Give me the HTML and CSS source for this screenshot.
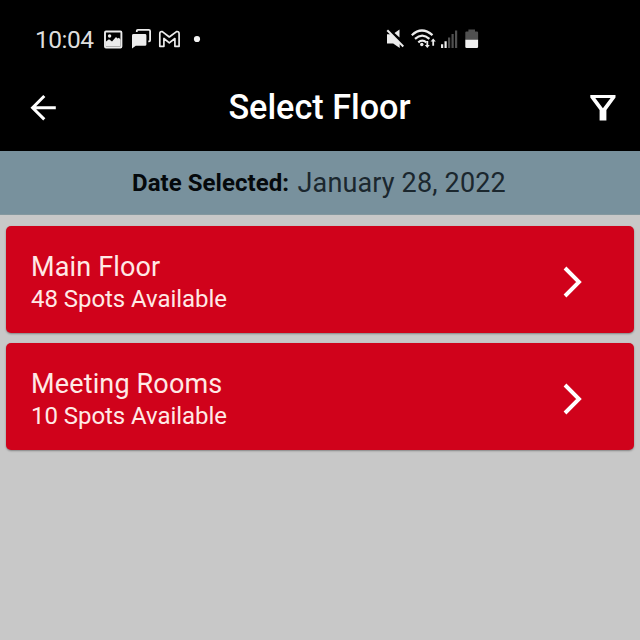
FILE: index.html
```html
<!DOCTYPE html>
<html lang="en">
<head>
<meta charset="utf-8">
<title>Select Floor</title>
<link rel="stylesheet" href="styles.css">
</head>
<body>
<header class="top">
  <div class="status">
    <div class="status-left">
      <span class="clock">10:04</span>
      <svg class="ic-notify" width="104" height="24" viewBox="100 27 104 24">
        <rect x="105" y="31.500" width="16.400" height="16" rx="1" fill="none" stroke="#ececec" stroke-width="1.900"/>
        <circle cx="109.600" cy="36" r="1.700" fill="#ececec"/>
        <path d="M106 46.500v-5l3-2.200 3 2.200 4-4.500 1.500 1.500 1.500-.8 1.500 2v6.800z" fill="#ececec"/>
        <path d="M133.600 34h11.400q1.400 0 1.400 1.400v9q0 1.400-1.400 1.400h-9.200l-3.800 2.700V35.400q0-1.400 1.600-1.400z" fill="#ececec"/>
        <path d="M136.800 32v-1.200q0-1 1-1h11q1.300 0 1.300 1.300v9.200q0 1-1 1h-.8" fill="none" stroke="#ececec" stroke-width="1.800"/>
        <path d="M159.800 46.300V33.800q0-2.600 2.500-2.200l7 5.400 7.200-5.400q2.600-.4 2.600 2.200v12.500h-4.200v-7.800l-5.600 4.300-5.400-4.300v7.800z" fill="none" stroke="#ececec" stroke-width="1.700" stroke-linejoin="round"/>
        <circle cx="197" cy="39" r="3.100" fill="#f4f4f4"/>
      </svg>
    </div>
    <svg class="ic-system" width="96" height="24" viewBox="385 27 96 24">
      <path d="M387 34.300h4.700l8 8v5.700l-6.500-4.600H387zM394.500 33l5-3.600v8z" fill="#ececec"/>
      <path d="M387.300 30.300l16 16.200" stroke="#ececec" stroke-width="2"/>
      <g fill="none" stroke="#ececec" stroke-width="2.200">
        <path d="M411.800 35.200q10-9.400 20.700 0"/>
        <path d="M415 38.900q7.200-6.400 14.400 0"/>
        <path d="M418.300 42.300q4-3.500 8 0"/>
      </g>
      <circle cx="421.800" cy="44.500" r="1.700" fill="#ececec"/>
      <path d="M426.400 41h1.800v4h1.600l-2.500 3-2.500-3h1.600zM432.300 45.800h1.800v-4.200h1.700l-2.600-3.200-2.600 3.200h1.700z" fill="#ececec"/>
      <path d="M441 44.300h2.200v3.700H441zM444.500 41.300h2.200V48h-2.200z" fill="#ececec"/>
      <path d="M448 37.500h2.200V48H448zM451.500 34h2.200v14h-2.200zM455 30.500h2.200V48H455z" fill="#505050"/>
      <path d="M465.300 40v-7.500q0-1.100 1.100-1.100h2v-2h6.600v2h2q1.100 0 1.100 1.100V40z" fill="#505050"/>
      <path d="M465.300 39.800h12.800v7q0 1.200-1.200 1.200h-10.400q-1.200 0-1.200-1.200z" fill="#f0f0f0"/>
    </svg>
  </div>
  <div class="appbar">
    <svg width="28" height="28" viewBox="29 94 28 28" fill="none" stroke="#fff" stroke-width="3">
      <path d="M55.800 107.700H33M44.300 96L32.600 107.700l11.700 11.700"/>
    </svg>
    <h1 class="title">Select Floor</h1>
    <svg width="28" height="28" viewBox="589 94 28 28">
      <path fill="#fff" fill-rule="evenodd" d="M590.300 95h25.200v2.500l-9.100 12.500v10.600h-6.800V110l-9.300-12.500zM595.300 97.900l7.600 10.300 7.700-10.300z"/>
    </svg>
  </div>
</header>
<div class="date"><b class="date-label">Date Selected:</b><span class="date-value">January 28, 2022</span></div>
<main class="floors">
  <section class="card">
    <div>
      <div class="name">Main Floor</div>
      <div class="spots">48 Spots Available</div>
    </div>
    <svg width="22" height="34" viewBox="0 0 22 34" fill="none" stroke="#fff" stroke-width="3.900"><path d="M3 3l14 14-14 14"/></svg>
  </section>
  <section class="card card-rooms">
    <div>
      <div class="name">Meeting Rooms</div>
      <div class="spots">10 Spots Available</div>
    </div>
    <svg width="22" height="34" viewBox="0 0 22 34" fill="none" stroke="#fff" stroke-width="3.900"><path d="M3 3l14 14-14 14"/></svg>
  </section>
</main>
</body>
</html>
```
FILE: styles.css
```css
* { box-sizing: border-box; }
body {
  margin: 0;
  height: 640px;
  overflow: hidden;
  background: #c8c8c8;
  font-family: Roboto, "Liberation Sans", sans-serif;
}
svg { display: block; flex: none; }
.top { height: 151px; background: #000; color: #fff; }
.status {
  height: 78px;
  padding: 0 159px 0 35px;
  display: flex;
  align-items: center;
  justify-content: space-between;
}
.status-left { display: flex; align-items: center; }
.clock { width: 65px; font-size: 24.500px; line-height: 28px; letter-spacing: -0.5px; color: #dedede; white-space: nowrap; padding-top: 2px; }
.appbar {
  height: 60px;
  padding: 0 23px 0 29px;
  display: flex;
  align-items: center;
  justify-content: space-between;
}
.title { margin: 0 7px 2px 0; font-size: 34.200px; font-weight: 500; line-height: 40px; white-space: nowrap; }
.date {
  height: 64px;
  padding-left: 132px;
  display: flex;
  align-items: center;
  background: #78919d;
  border-bottom: 1px solid #84989f;
  white-space: nowrap;
}
.date-label { width: 165.500px; font-size: 24px; font-weight: 700; letter-spacing: 0.050px; color: #05090c; }
.date-value { font-size: 27px; letter-spacing: 0.150px; color: #1b272e; }
.floors { padding: 11px 6px; display: flex; flex-direction: column; gap: 10px; }
.card {
  height: 107px;
  padding: 5px 50px 0 25px;
  display: flex;
  align-items: center;
  justify-content: space-between;
  border-radius: 5px;
  background: #d0021b;
  box-shadow: 0 1px 2px rgba(0, 0, 0, .35);
  color: #ffe9e6;
  white-space: nowrap;
}
.card-rooms { padding-top: 4px; }
.name { font-size: 27px; line-height: 34px; letter-spacing: 0.150px; }
.spots { font-size: 24px; line-height: 30px; letter-spacing: -0.050px; }
```
